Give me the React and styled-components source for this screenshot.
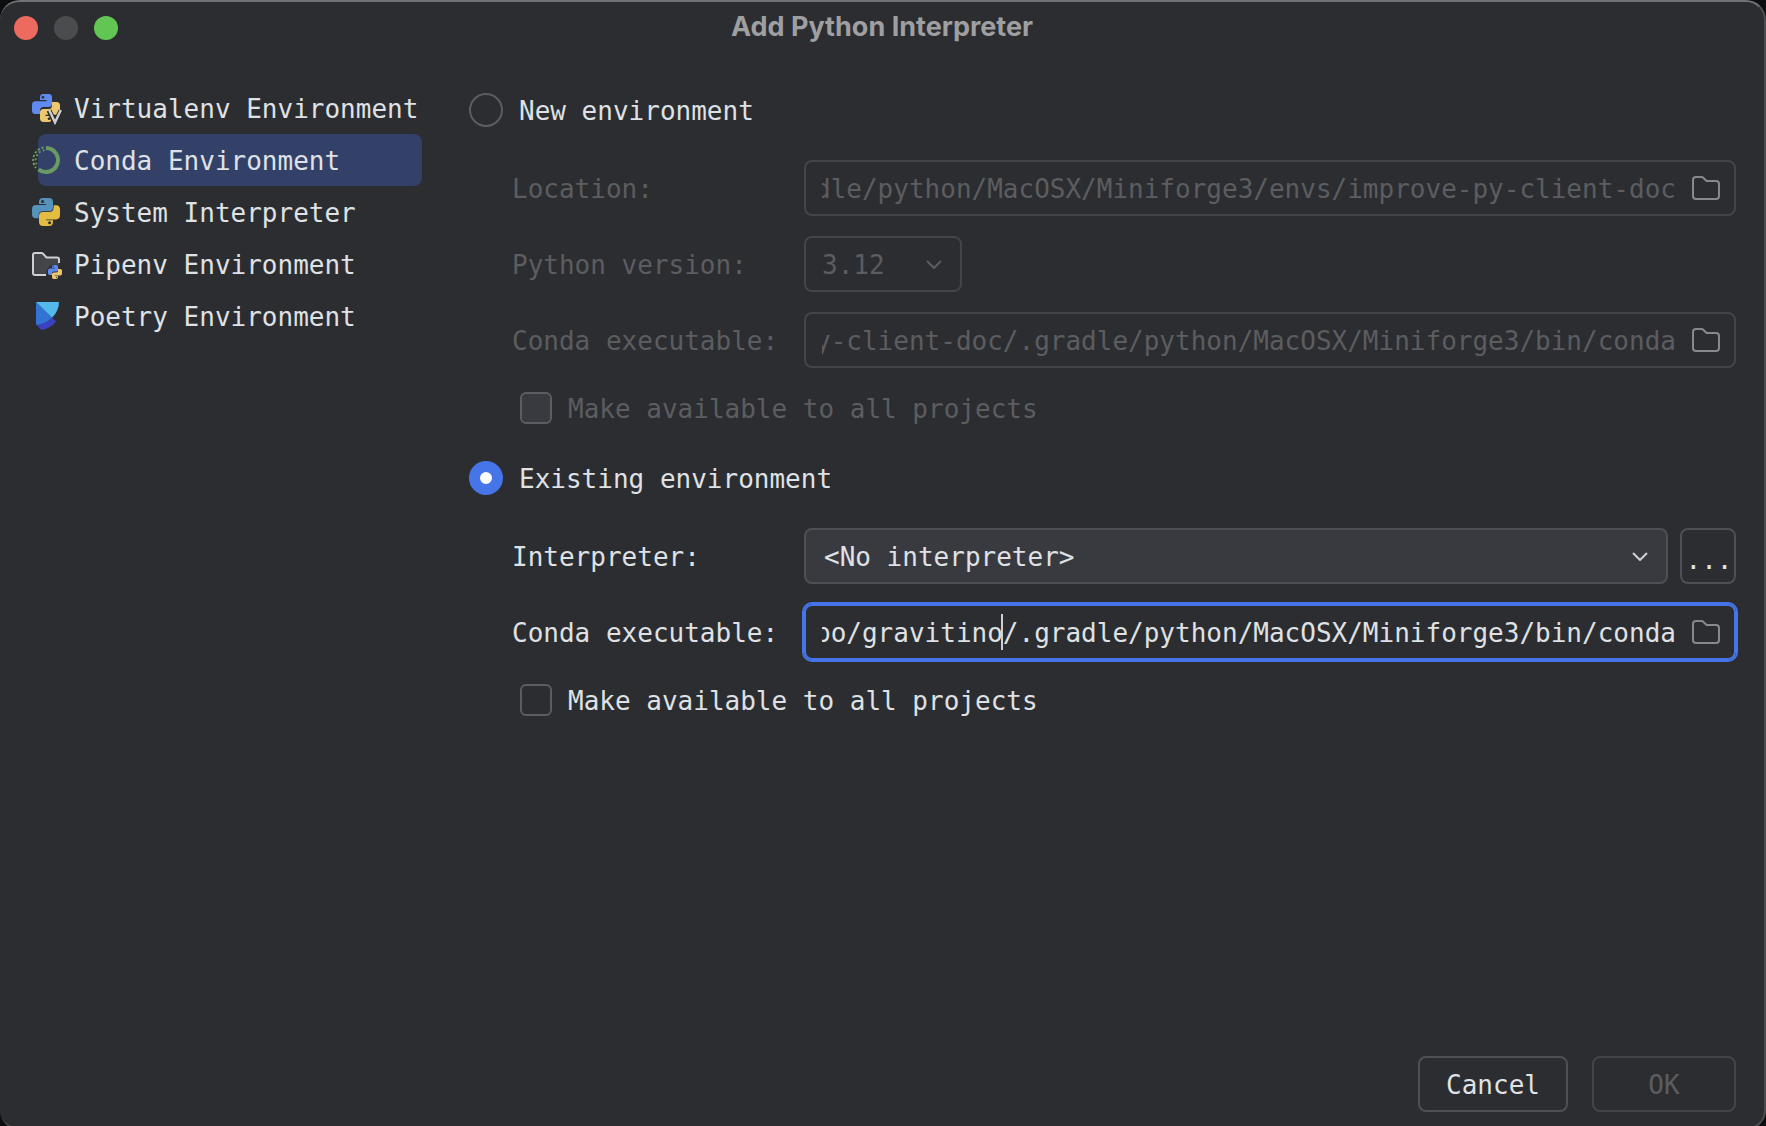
import React, { useLayoutEffect, useRef } from "react";
import styled, { createGlobalStyle, css } from "styled-components";

const c = {
  bg: "#2c2d30",
  field: "#393a3f",
  text: "#dfe1e5",
  muted: "#5b5d61",
  border: "#4e5055",
  borderDim: "#434549",
  icon: "#87898f",
  blue: "#4675ea",
  selected: "#334169",
};

const mono = `"DejaVu Sans Mono", "Liberation Mono", monospace`;

const GlobalStyle = createGlobalStyle`
  * { box-sizing: border-box; }
  body { margin: 0; background: #0d0e10; overflow: hidden; }
  button, input, select { font: inherit; color: inherit; margin: 0; }
`;

const Window = styled.div`
  min-height: calc(100vh + 4px);
  display: flex;
  flex-direction: column;
  background: ${c.bg};
  border: 2px solid #4c4d50;
  border-top-color: #707275;
  border-left-width: 0;
  border-radius: 20px;
  color: ${c.text};
  font: 26px/32px ${mono};
`;

const TitleBar = styled.header`
  display: grid;
  grid-template-columns: 1fr auto 1fr;
  align-items: center;
  height: 52px;
  padding: 0 14px;
`;

const Lights = styled.div`
  display: flex;
  gap: 16px;
`;

const Light = styled.button`
  width: 24px;
  height: 24px;
  padding: 0;
  border: 0;
  border-radius: 50%;
  background: ${(p) => p.$color};
`;

const Title = styled.h1`
  margin: 0 0 2px;
  font: 700 27px/32px Inter, "Liberation Sans", sans-serif;
  color: #9e9fa1;
`;

const Body = styled.main`
  flex: 1;
  display: flex;
  gap: 47px;
  padding: 28px 28px 0 38px;
`;

const Sidebar = styled.nav`
  flex: 0 0 384px;
`;

const EnvItem = styled.button`
  display: flex;
  align-items: center;
  gap: 14px;
  width: 100%;
  height: 52px;
  padding: 2px 0 0;
  border: 0;
  border-radius: 8px;
  background: ${(p) => (p.$active ? c.selected : "transparent")};
  text-align: left;
  white-space: nowrap;
`;

const EnvIcon = styled.svg`
  flex: none;
  width: 30px;
  height: 30px;
  margin-left: -6px;
  margin-right: -2px;
  overflow: visible;
`;

const Form = styled.form`
  flex: 1;
  min-width: 0;
  padding-top: 2px;
`;

const Section = styled.section`
  margin-bottom: 28px;
`;

const RadioRow = styled.label`
  display: flex;
  align-items: center;
  gap: 16px;
  height: 52px;
  margin-bottom: 24px;
`;

const Radio = styled.input`
  appearance: none;
  width: 34px;
  height: 34px;
  border: 2px solid #5b5d62;
  border-radius: 50%;
  &:checked {
    border: 11px solid ${c.blue};
    background: #fff;
  }
`;

const Fields = styled.div`
  display: grid;
  grid-template-columns: 292px 1fr;
  row-gap: 20px;
  align-items: center;
  padding-left: 43px;
  color: ${(p) => (p.$disabled ? c.muted : c.text)};
`;

const FieldLabel = styled.label`
  padding-top: 2px;
  white-space: nowrap;
`;

const Line = styled.div`
  display: flex;
  gap: 12px;
  min-width: 0;
`;

const frame = css`
  height: 56px;
  border: 2px solid ${(p) => (p.$disabled ? c.borderDim : c.border)};
  border-radius: 8px;
`;

const PathBox = styled.div`
  ${frame}
  position: relative;
  flex: 1;
  min-width: 0;
  display: flex;
  align-items: center;
  gap: 16px;
  padding: 0 14px 0 16px;
  ${(p) =>
    p.$focused &&
    css`
      border-color: ${c.blue};
      box-shadow: 0 0 0 2px ${c.blue};
    `}
`;

const PathInput = styled.input`
  flex: 1;
  min-width: 0;
  height: 40px;
  padding: 2px 0 0;
  border: 0;
  outline: 0;
  background: transparent;
  &:disabled {
    color: ${c.muted};
  }
`;

const BrowseButton = styled.button`
  display: flex;
  padding: 0;
  border: 0;
  background: none;
  color: ${c.icon};
`;

const Caret = styled.span`
  position: absolute;
  top: 8px;
  right: calc(58px + ${(p) => p.$after}ch);
  width: 2px;
  height: 36px;
  background: #ced0d6;
`;

const SelectBox = styled.div`
  display: grid;
  align-items: center;
  flex: ${(p) => (p.$wide ? "1" : "0 0 158px")};
  min-width: 0;
  > * {
    grid-area: 1 / 1;
  }
`;

const Select = styled.select`
  ${frame}
  appearance: none;
  width: 100%;
  padding: 2px 48px 0 ${(p) => (p.$disabled ? 16 : 18)}px;
  background: ${(p) => (p.$disabled ? "transparent" : c.field)};
  opacity: 1;
  outline: 0;
`;

const Chevron = styled.svg`
  justify-self: end;
  width: 16px;
  height: 9px;
  margin-right: 20px;
  fill: none;
  stroke: ${(p) => (p.$disabled ? c.muted : "#ced0d6")};
  stroke-width: 2;
  pointer-events: none;
`;

const Button = styled.button`
  ${frame}
  width: ${(p) => p.$width}px;
  padding: 2px 0 0;
  background: transparent;
  color: ${(p) => (p.$disabled ? c.muted : c.text)};
`;

const MoreButton = styled(Button)`
  padding: 8px 0 0 2px;
`;

const CheckRow = styled.label`
  display: flex;
  align-items: center;
  gap: 16px;
  height: 32px;
  margin: 24px 0 0 51px;
  color: ${(p) => (p.$disabled ? c.muted : c.text)};
`;

const Check = styled.input`
  appearance: none;
  width: 32px;
  height: 32px;
  border: 2px solid #5b5d62;
  border-radius: 6px;
  background: transparent;
  &:disabled {
    background: ${c.field};
  }
`;

const ChoiceText = styled.span`
  padding-top: 2px;
`;

const Footer = styled.footer`
  display: flex;
  justify-content: flex-end;
  gap: 24px;
  padding: 0 28px 16px;
`;

const SNAKE =
  "M8 3.4Q8 0 11.5 0H16.5Q20 0 20 3.4V9.5Q20 13 16.5 13H11.5Q8 13 8 16.5V20H3.5Q0 20 0 16.5V11Q0 7.2 3.5 7.2H14.5V6H8Z";

function Snake({ color, eye = c.bg, flip }) {
  return (
    <g transform={flip ? "rotate(180 14 14)" : undefined}>
      <path d={SNAKE} fill={color} />
      <circle cx="11" cy="3.3" r="1.3" fill={eye} />
    </g>
  );
}

function VirtualenvIcon() {
  return (
    <EnvIcon viewBox="0 0 30 30">
      <Snake color="#5f8bef" />
      <Snake color="#edc76d" flip />
      <path d="M17 16.5 23 29 29 16.5" fill="none" stroke={c.bg} strokeWidth="5" />
      <path d="M17.2 16 23 28.5 28.8 16" fill="none" stroke="#ced0d6" strokeWidth="2.4" />
    </EnvIcon>
  );
}

function CondaIcon() {
  return (
    <EnvIcon viewBox="0 0 30 30" fill="none" stroke="#6a9a63">
      <path d="M14 2A12 12 0 1 1 6.5 23.4" strokeWidth="4" />
      <path d="M11.5 1.6A12.7 12.7 0 0 0 4 22" strokeWidth="2" strokeDasharray="2.2 1.8" />
      <path d="M12.5 4.2A10 10 0 0 0 5 19" strokeWidth="1.8" strokeDasharray="1.8 2.4" />
    </EnvIcon>
  );
}

function SystemIcon() {
  return (
    <EnvIcon viewBox="0 0 30 30">
      <path
        d="M7 4Q7 0 11 0H17Q21 0 21 4V9.5Q21 13.2 17 13.2H11Q6.6 13.2 6.6 17.5V20.2H4Q0 20.2 0 16V11Q0 7 4 7H14V6H7Z"
        fill="#5593bd"
      />
      <path
        d="M21 24Q21 28 17 28H11Q7 28 7 24V18Q7 14 11 14H17Q21.6 14 21.6 9.5V7.2H24Q28 7.2 28 11.5V17Q28 21.4 24 21.4H14V22.2H21Z"
        fill="#e4bc42"
      />
      <circle cx="10.6" cy="3.4" r="1.5" fill={c.bg} />
      <circle cx="17.6" cy="24.7" r="1.5" fill={c.bg} />
    </EnvIcon>
  );
}

function PipenvIcon() {
  return (
    <EnvIcon viewBox="0 0 30 30">
      <path d="M3 3H10L14 7.5H25Q27 7.5 27 9.5V25H3Q1 25 1 23V5Q1 3 3 3Z" fill="#434549" />
      <path
        d="M27 13V9.5Q27 7.5 25 7.5H14.5L11.2 3.8Q10.5 3 9.5 3H3Q1 3 1 5V23Q1 25 3 25H14"
        fill="none"
        stroke="#ced0d6"
        strokeWidth="2"
      />
      <circle cx="23" cy="23" r="8.5" fill={c.bg} />
      <g transform="translate(16 15) scale(.5)">
        <Snake color="#5f8bef" />
        <Snake color="#edc76d" flip />
      </g>
    </EnvIcon>
  );
}

function PoetryIcon() {
  return (
    <EnvIcon viewBox="0 0 30 30">
      <path d="M4 22.5Q14 22.5 20 15.5L24 19.5Q18 27 9.5 28Z" fill="#3c41c4" />
      <path d="M4 0 20 15.8Q13 22.8 4 22.8Z" fill="#3273d3" />
      <path d="M4 0H27Q27 9 20 15.8Z" fill="#52b9ea" />
    </EnvIcon>
  );
}

function FolderIcon() {
  return (
    <svg width="28" height="24" viewBox="0 0 28 24" fill="none" stroke="currentColor" strokeWidth="2">
      <path d="M1 4Q1 1 4 1H9.6Q10.5 1 11.2 1.7L14.6 5H24Q27 5 27 8V20Q27 23 24 23H4Q1 23 1 20Z" />
    </svg>
  );
}

function PathField({ id, value, disabled, focused, after }) {
  const ref = useRef(null);
  useLayoutEffect(() => {
    const toEnd = () => {
      if (ref.current) ref.current.scrollLeft = ref.current.scrollWidth;
    };
    toEnd();
    window.addEventListener("resize", toEnd);
    return () => window.removeEventListener("resize", toEnd);
  }, []);
  return (
    <PathBox $disabled={disabled} $focused={focused}>
      <PathInput id={id} ref={ref} defaultValue={value} disabled={disabled} spellCheck={false} />
      {after && <Caret $after={after.length} />}
      <BrowseButton type="button" aria-label="Browse" disabled={disabled}>
        <FolderIcon />
      </BrowseButton>
    </PathBox>
  );
}

function Dropdown({ id, value, disabled, wide }) {
  return (
    <SelectBox $wide={wide}>
      <Select id={id} disabled={disabled} $disabled={disabled}>
        <option>{value}</option>
      </Select>
      <Chevron $disabled={disabled} viewBox="0 0 16 9">
        <path d="M1 1 8 8 15 1" />
      </Chevron>
    </SelectBox>
  );
}

function AllProjects({ disabled }) {
  return (
    <CheckRow $disabled={disabled}>
      <Check type="checkbox" disabled={disabled} />
      <ChoiceText>Make available to all projects</ChoiceText>
    </CheckRow>
  );
}

const environments = [
  ["Virtualenv Environment", VirtualenvIcon],
  ["Conda Environment", CondaIcon],
  ["System Interpreter", SystemIcon],
  ["Pipenv Environment", PipenvIcon],
  ["Poetry Environment", PoetryIcon],
];

const condaTail = "/.gradle/python/MacOSX/Miniforge3/bin/conda";

export default function App() {
  return (
    <>
      <GlobalStyle />
      <Window>
        <TitleBar>
          <Lights>
            <Light aria-label="Close" $color="#ed6a5f" />
            <Light aria-label="Minimize" $color="#4b4c4e" />
            <Light aria-label="Zoom" $color="#62c655" />
          </Lights>
          <Title>Add Python Interpreter</Title>
        </TitleBar>
        <Body>
          <Sidebar>
            {environments.map(([name, Icon]) => (
              <EnvItem key={name} $active={name === "Conda Environment"}>
                <Icon />
                {name}
              </EnvItem>
            ))}
          </Sidebar>
          <Form>
            <Section>
              <RadioRow>
                <Radio type="radio" name="mode" />
                <ChoiceText>New environment</ChoiceText>
              </RadioRow>
              <Fields $disabled>
                <FieldLabel htmlFor="location">Location:</FieldLabel>
                <Line>
                  <PathField
                    id="location"
                    disabled
                    value="dle/python/MacOSX/Miniforge3/envs/improve-py-client-doc"
                  />
                </Line>
                <FieldLabel htmlFor="version">Python version:</FieldLabel>
                <Line>
                  <Dropdown id="version" value="3.12" disabled />
                </Line>
                <FieldLabel htmlFor="new-conda">Conda executable:</FieldLabel>
                <Line>
                  <PathField id="new-conda" disabled value={"y-client-doc" + condaTail} />
                </Line>
              </Fields>
              <AllProjects disabled />
            </Section>
            <Section>
              <RadioRow>
                <Radio type="radio" name="mode" defaultChecked />
                <ChoiceText>Existing environment</ChoiceText>
              </RadioRow>
              <Fields>
                <FieldLabel htmlFor="interpreter">Interpreter:</FieldLabel>
                <Line>
                  <Dropdown id="interpreter" value="<No interpreter>" wide />
                  <MoreButton type="button" $width={56}>...</MoreButton>
                </Line>
                <FieldLabel htmlFor="conda">Conda executable:</FieldLabel>
                <Line>
                  <PathField id="conda" focused value={"po/gravitino" + condaTail} after={condaTail} />
                </Line>
              </Fields>
              <AllProjects />
            </Section>
          </Form>
        </Body>
        <Footer>
          <Button $width={150}>Cancel</Button>
          <Button $width={144} $disabled disabled>OK</Button>
        </Footer>
      </Window>
    </>
  );
}
